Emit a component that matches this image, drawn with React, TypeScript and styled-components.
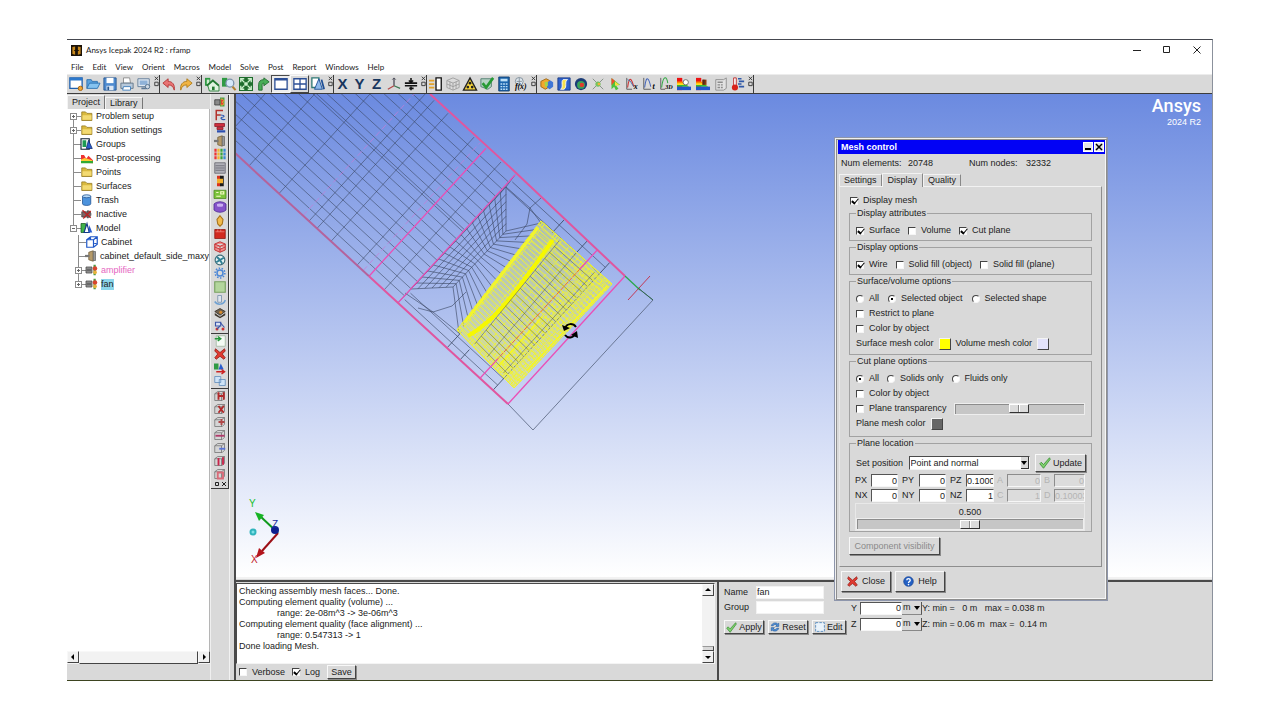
import React from 'react';
import styled, { createGlobalStyle, css } from 'styled-components';

const GREY = '#d9d9d9';
const DARK = '#3c3c3c';
const PINK = '#ea4fb6';

const Global = createGlobalStyle`
  * { box-sizing: border-box; }
  body {
    margin: 0;
    background: #fff;
    color: #222;
    font: 9px/11px "Liberation Sans", Arial, sans-serif;
  }
  button, input, select { font: inherit; color: inherit; margin: 0; padding: 0; }
  button { border: 0; background: none; }
`;

const raised = css`
  border: 1px solid;
  border-color: #f8f8f8 #444 #444 #f8f8f8;
  box-shadow: 1px 1px 0 #8a8a8a;
  background: ${GREY};
`;
const sunken = css`
  border: 1px solid;
  border-color: #4a4a4a #f4f4f4 #f4f4f4 #4a4a4a;
`;

/* ---------- window frame ---------- */
const Page = styled.div`
  min-height: 100vh;
  padding: 39px 67px;
  display: flex;
`;
const AppWindow = styled.main`
  position: relative;
  flex: 1;
  min-width: 0;
  display: flex;
  flex-direction: column;
  background: ${GREY};
  border-top: 1px solid #45484f;
  border-right: 1px solid #8b919c;
  border-bottom: 1px solid #3d4420;
`;
const TitleBar = styled.header`
  height: 20px;
  display: flex;
  align-items: center;
  gap: 4px;
  padding-left: 4px;
  background: #fff;
  font: 8px/12px Lato, "Open Sans", sans-serif;
`;
const Title = styled.h1`
  flex: 1;
  margin: 0;
  font: inherit;
`;
const WinButtons = styled.div`
  display: flex;
`;
const WinButton = styled.button`
  width: 30px;
  height: 20px;
  display: grid;
  place-items: center;
`;
const MenuBar = styled.nav`
  height: 14px;
  display: flex;
  align-items: center;
  gap: 9px;
  padding: 0 0 1px 4px;
  background: #fff;
  font: 8px/12px Lato, "Open Sans", sans-serif;
`;
const ToolBar = styled.div`
  height: 20px;
  display: flex;
  border-top: 1px solid #ececec;
  border-bottom: 1px solid ${DARK};
`;
const ToolGroup = styled.div<{ $pad?: number }>`
  display: flex;
  align-items: center;
  padding-left: ${p => p.$pad || 0}px;
  border-right: 1px solid ${DARK};
`;
const ToolButton = styled.button<{ $w?: number; $state?: 'in' | 'out' }>`
  width: ${p => p.$w || 17}px;
  height: 18px;
  display: grid;
  place-items: center;
  ${p => p.$state === 'in' && css`${sunken} background: #ececec;`}
  ${p => p.$state === 'out' && css`${raised} box-shadow: none;`}
`;
const AxisLetter = styled.span`
  font-weight: bold;
  font-size: 15px;
  line-height: 18px;
  color: #17365e;
`;
const Handle = styled.span`
  width: 7px;
  height: 16px;
  display: grid;
  place-items: start center;
`;

/* ---------- project panel ---------- */
const Body = styled.div`
  flex: 1;
  display: flex;
  min-height: 0;
`;
const ProjectPanel = styled.aside`
  width: 143px;
  display: flex;
  flex-direction: column;
  padding-bottom: 16px;
`;
const SideTabs = styled.div`
  height: 15px;
  display: flex;
  align-items: flex-end;
`;
const SideTab = styled.button<{ $on?: boolean }>`
  height: ${p => (p.$on ? 14 : 12)}px;
  padding: 0 4px;
  border-top: 1px solid #f4f4f4;
  border-left: 1px solid #f4f4f4;
  border-right: 1px solid #777;
`;
const Tree = styled.ul`
  flex: 1;
  margin: 0;
  padding: 0;
  list-style: none;
  background: #fff;
  border-right: 1px solid #b5b5b5;
`;
const TreeRow = styled.li<{ $child?: boolean }>`
  height: 14px;
  display: flex;
  align-items: center;
  padding-left: ${p => (p.$child ? 8 : 3)}px;
  white-space: nowrap;
`;
const Gutter = styled.span<{ $first?: boolean; $last?: boolean }>`
  width: 11px;
  height: 14px;
  display: flex;
  align-items: center;
  background:
    linear-gradient(#8c8c8c, #8c8c8c) 3px ${p => (p.$first ? '7px' : '0')} / 1px ${p => (p.$last ? '7px' : '14px')} no-repeat,
    linear-gradient(#8c8c8c, #8c8c8c) 3px 7px / 8px 1px no-repeat;
`;
const Expander = styled.button<{ $open?: boolean }>`
  width: 7px;
  height: 7px;
  border: 1px solid #8c8c8c;
  background:
    linear-gradient(#666, #666) 1px 2px / 3px 1px no-repeat,
    linear-gradient(#666, #666) 2px ${p => (p.$open ? 2 : 1)}px / 1px ${p => (p.$open ? 1 : 3)}px no-repeat,
    #fff;
`;
const TreeLabel = styled.span<{ $pink?: boolean; $sel?: boolean }>`
  margin-left: 3px;
  color: ${p => (p.$pink ? '#e566bf' : '#222')};
  background: ${p => (p.$sel ? '#8cd6ea' : 'transparent')};
`;
const HScroll = styled.div`
  height: 13px;
  display: flex;
  background: #f2f2f2;
`;
const ScrollButton = styled.button`
  width: 12px;
  height: 12px;
  display: grid;
  place-items: center;
  ${raised}
  box-shadow: none;
  background: #f0f0f0;
`;
const HThumb = styled.div`
  flex: 1;
  ${raised}
  box-shadow: none;
  background: #f2f2f2;
`;
const Strip = styled.div`
  width: 19px;
  border-left: 1px solid #efefef;
  padding-top: 1px;
`;
const StripGroup = styled.div<{ $h: number }>`
  height: ${p => p.$h}px;
  display: flex;
  flex-direction: column;
  align-items: center;
  justify-content: space-around;
  border-right: 1px solid ${DARK};
  border-bottom: 1px solid ${DARK};
`;
const StripButton = styled.button`
  width: 13px;
  height: 12px;
  display: grid;
  place-items: center;
`;
const Sash = styled.div`
  width: 7px;
  border-left: 1px solid #f2f2f2;
  border-right: 2px solid #4a4a4a;
`;

/* ---------- right side ---------- */
const Main = styled.div`
  flex: 1;
  min-width: 0;
  display: flex;
  flex-direction: column;
`;
const Viewport = styled.section`
  position: relative;
  flex: 1;
  min-height: 300px;
  overflow: hidden;
  background: linear-gradient(#6b8ae0, #fff);
`;
const Scene = styled.svg`
  position: absolute;
  left: 0;
  top: 0;
  width: 976px;
  height: 484px;
`;
const Brand = styled.div`
  position: absolute;
  top: 1px;
  right: 11px;
  color: #fff;
  text-align: right;
`;
const BrandName = styled.div`
  font: 500 18px/22px Roboto, "Liberation Sans", sans-serif;
`;
const HSash = styled.div`
  height: 5px;
  border-top: 2px solid #f2f2f2;
  border-bottom: 2px solid #4a4a4a;
`;
const Bottom = styled.div`
  height: 98px;
  display: flex;
`;
const LogPane = styled.div`
  width: 483px;
  padding-top: 1px;
  border-right: 2px solid #4a4a4a;
`;
const LogBox = styled.div`
  height: 81px;
  width: 479px;
  display: flex;
  ${sunken}
  background: #fff;
`;
const LogText = styled.div`
  flex: 1;
  padding: 2px;
  line-height: 11px;
`;
const LogLine = styled.div<{ $in?: boolean }>`
  padding-left: ${p => (p.$in ? 38 : 0)}px;
`;
const VScroll = styled.div`
  width: 12px;
  display: flex;
  flex-direction: column;
  background: #f2f2f2;
`;
const VThumb = styled.div`
  height: 5px;
  margin-top: auto;
  ${raised}
  box-shadow: none;
  border-top-color: #999;
`;
const LogBar = styled.div`
  height: 16px;
  display: flex;
  align-items: center;
  gap: 7px;
  padding-left: 3px;
`;
const ObjectForm = styled.form`
  display: grid;
  grid-template-columns: 32px 68px;
  grid-template-rows: 14px 14px 16px;
  row-gap: 1px;
  align-content: start;
  align-items: center;
  padding: 3px 0 0 5px;
  width: 132px;
`;
const FormButtons = styled.div`
  grid-column: 1 / 3;
  display: flex;
  gap: 4px;
  padding-top: 8px;
`;
const Field = styled.input<{ $w?: number; $right?: boolean }>`
  width: ${p => (p.$w ? `${p.$w}px` : '100%')};
  min-width: 0;
  height: 13px;
  border: 1px solid;
  border-color: #555 #f6f6f6 #f6f6f6 #555;
  border-radius: 0;
  background: #fff;
  text-align: ${p => (p.$right ? 'right' : 'left')};
  &:disabled { background: #dcdcdc; color: #b4b4b4; border-color: #8c8c8c #f6f6f6 #f6f6f6 #8c8c8c; }
`;
const FlatField = styled(Field)`
  border-color: #f2f2f2;
`;
const PushButton = styled.button<{ $h?: number; $w?: number }>`
  height: ${p => p.$h || 14}px;
  ${p => p.$w && `width: ${p.$w}px;`}
  display: flex;
  align-items: center;
  justify-content: center;
  gap: 2px;
  padding: 0 2px;
  white-space: nowrap;
  ${raised}
  &:disabled { color: #8a8a8a; }
`;
const WideButton = styled(PushButton)`
  gap: 4px;
`;
const Extents = styled.div`
  padding-top: 19px;
  display: flex;
  flex-direction: column;
  gap: 2px;
`;
const ExtentRow = styled.div`
  display: flex;
  align-items: center;
  height: 14px;
  white-space: pre;
`;
const AxisLabel = styled.label`
  width: 9px;
`;
const Unit = styled.button`
  width: 20px;
  height: 13px;
  line-height: 11px;
  display: flex;
  align-items: center;
  justify-content: space-between;
  padding: 0 1px;
  border-right: 1px solid #555;
  border-bottom: 1px solid #888;
`;

/* ---------- dialog ---------- */
const Dialog = styled.section`
  position: absolute;
  top: 97px;
  right: 104px;
  width: 274px;
  height: 464px;
  border: 2px solid;
  border-color: #f0f0f0 #8e8e8e #8e8e8e #f0f0f0;
  outline: 1px solid #8e96ac;
  outline-offset: -1px;
  background: ${GREY};
  padding: 1px 1px 0 3px;
  box-shadow: inset 1px 1px 0 #8e8e8e, inset -1px -1px 0 #f6f6f6;
`;
const DialogTitle = styled.header`
  height: 14px;
  display: flex;
  align-items: center;
  gap: 1px;
  padding: 0 1px 0 3px;
  margin-left: -1px;
  background: #0202f5;
  color: #fff;
`;
const DialogName = styled.h2`
  flex: 1;
  margin: 0;
  font-size: 9px;
  line-height: 12px;
`;
const SmallWin = styled.button`
  width: 10px;
  height: 10px;
  display: grid;
  place-items: center;
  border: 1px solid #fff;
  background: #e6e6e6;
`;
const Stats = styled.div`
  display: flex;
  height: 19px;
  align-items: center;
  padding-left: 2px;
`;
const Stat = styled.span<{ $w: number }>`
  width: ${p => p.$w}px;
`;
const Tabs = styled.div`
  height: 13px;
  display: flex;
  align-items: flex-end;
`;
const Tab = styled.button<{ $on?: boolean }>`
  height: ${p => (p.$on ? 14 : 12)}px;
  margin-bottom: ${p => (p.$on ? -1 : 0)}px;
  padding: 0 ${p => (p.$on ? 5 : 4)}px;
  position: relative;
  background: ${GREY};
  border-top: 1px solid #f2f2f2;
  border-left: 1px solid #f2f2f2;
  border-right: 1px solid #888;
`;
const TabPanel = styled.div`
  height: 381px;
  margin-right: 3px;
  padding: 6px 9px 0;
  border: 1px solid;
  border-color: #f2f2f2 #8e8e8e #8e8e8e #e8e8e8;
`;
const Group = styled.fieldset<{ $b?: number }>`
  min-width: 0;
  margin: 0 0 1px;
  padding: 4px 6px ${p => p.$b ?? 2}px;
  border: 1px solid #a2a2a2;
`;
const Legend = styled.legend`
  height: 11px;
  line-height: 11px;
  padding: 0 1px;
`;
const Row = styled.div<{ $gap?: number }>`
  height: 15px;
  display: flex;
  align-items: center;
  gap: ${p => p.$gap ?? 9}px;
  white-space: nowrap;
`;
const TopRow = styled(Row)`
  padding-left: 1px;
`;
const Option = styled.label`
  display: flex;
  align-items: center;
  gap: 5px;
  white-space: nowrap;
`;
const CheckInput = styled.input`
  appearance: none;
  width: 8px;
  height: 8px;
  flex: none;
  border: 1px solid;
  border-color: #444 #f6f6f6 #f6f6f6 #444;
  background: #fff;
  &:checked::before {
    content: '';
    display: block;
    width: 3px;
    height: 5px;
    margin: -1px 0 0 2px;
    border: solid #000;
    border-width: 0 1px 2px 0;
    transform: rotate(40deg);
  }
`;
const RadioInput = styled(CheckInput)`
  border-radius: 50%;
  &:checked::before {
    width: 2px;
    height: 2px;
    margin: 2px;
    border: 0;
    background: #000;
    transform: none;
  }
`;
const Swatch = styled.button<{ $c: string }>`
  width: 12px;
  height: 12px;
  border: 1px solid;
  border-color: #f4f4f4 #444 #444 #f4f4f4;
  background: ${p => p.$c};
`;
const Slider = styled.input`
  appearance: none;
  width: 100%;
  min-width: 0;
  height: 12px;
  border: 1px solid #eee;
  background: #c6c6c6;
  box-shadow: inset 1px 1px 0 #8c8c8c;
  &::-webkit-slider-thumb {
    appearance: none;
    width: 20px;
    height: 9px;
    border: 1px solid;
    border-color: #fff #333 #333 #fff;
    background: linear-gradient(90deg, #dcdcdc 8px, #888 8px, #888 9px, #fff 9px, #fff 10px, #dcdcdc 10px);
  }
`;
const SelectBox = styled.div`
  position: relative;
  width: 121px;
  height: 14px;
`;
const Select = styled.select`
  appearance: none;
  width: 100%;
  height: 14px;
  padding-left: 1px;
  ${sunken}
  border-radius: 0;
  background: #fff;
`;
const SelectArrow = styled.span`
  position: absolute;
  top: 1px;
  right: 1px;
  width: 8px;
  height: 12px;
  display: grid;
  place-items: center;
  background: ${GREY};
  border-right: 1px solid #333;
  border-bottom: 1px solid #333;
  pointer-events: none;
`;
const PositionRow = styled.div`
  display: flex;
  align-items: center;
  justify-content: space-between;
  height: 20px;
  margin-right: -1px;
`;
const Coords = styled.div`
  display: grid;
  grid-template-columns: 16px 27px 21px 27px 20px 28px 13px 34px 13px 31px;
  grid-auto-rows: 15px;
  align-items: center;
  margin-left: -1px;
`;
const CoordLabel = styled.label<{ $off?: boolean; $in?: number }>`
  padding-left: ${p => p.$in || 0}px;
  color: ${p => (p.$off ? '#b4b4b4' : 'inherit')};
`;
const PlaneSlider = styled.div`
  margin-left: -1px;
  display: flex;
  flex-direction: column;
  padding-top: 3px;
  border: 1px solid #e8e8e8;
  text-align: center;
`;
const PanelFoot = styled.div`
  padding-top: 4px;
`;
const DialogFoot = styled.footer`
  display: flex;
  gap: 4px;
  padding: 4px 0 0 2px;
`;

/* ---------- icons, each drawn on a 16 x 16 grid ---------- */
const small = { fontFamily: 'Liberation Serif, serif', fontStyle: 'italic', fontWeight: 'bold' } as const;
const rainbow = (
  <>
    <path d="M0 1h6v14H0z" fill="#e11" /><path d="M0 5h6l3 2v2H0z" fill="#f80" />
    <path d="M0 7h9l4 3H0z" fill="#fd2" /><path d="M0 9h11l3 2H0z" fill="#3b3" /><path d="M0 11h16v4H0z" fill="#25c" />
  </>
);
const fold = (
  <>
    <path d="M1 4V2.500h5L8 4.500h6.500v9.500H1z" fill="#d9b93f" stroke="#8f7318" />
    <path d="M2 7h12v6H2z" fill="#f3da72" />
  </>
);
const board = (c: string, d: string) => (
  <>
    <path d="M1 5l4-3h9v9l-3 3H1z" fill="#d5d5d5" stroke="#6f6f6f" /><path d="M1 5h9v9M10 5l4-3" fill="none" stroke="#6f6f6f" />
    <path d={d} fill="none" stroke={c} strokeWidth="2.500" />
  </>
);
const ICONS: Record<string, React.ReactNode> = {
  app: <><path d="M0 0h16v16H0z" fill="#1b1208" /><path d="M2 3l4-1v5L4 8l2 1v5l-4-1zM14 3l-4-1v5l2 1-2 1v5l4-1z" fill="#c98a1d" /></>,
  newWin: <><path d="M1 1h14v12H1z" fill="#fff" stroke="#1d5fae" strokeWidth="1.500" /><path d="M1 1h14v3H1z" fill="#2d78cc" /><circle cx="13" cy="13" r="2.500" fill="#f3a734" stroke="#a15f0a" /></>,
  open: <><path d="M1 13V3h5l1 2h6v3" fill="#5aa2df" stroke="#2a6fae" /><path d="M1 13L4 7h12l-3 6z" fill="#85c3f0" stroke="#2a6fae" /></>,
  save: <><path d="M1 1h14v14H1z" fill="#4f8bd0" stroke="#27568f" /><path d="M4 1h8v6H4z" fill="#fff" /><path d="M4 10h8v5H4z" fill="#dce7f4" /><path d="M5 11h2v4H5z" fill="#27568f" /></>,
  print: <><path d="M4 1h7l1 6H4z" fill="#fff" stroke="#888" /><path d="M1 7h14v6H1z" fill="#b8c9da" stroke="#5e7388" /><path d="M4 11h8v4H3z" fill="#fff" stroke="#3c7dbb" /></>,
  photo: <><path d="M1 2h13v9H1z" fill="#dfe8f1" stroke="#5d7896" /><path d="M3 4h9v5H3z" fill="#8fb2d8" /><path d="M5 13h6" stroke="#5d7896" strokeWidth="2" /><circle cx="12" cy="11" r="2.500" fill="#cfd9e4" stroke="#4d6a88" /></>,
  undo: <path d="M7 2L1 7l6 5V9c4 0 6 2 7 6 1-6-2-10-7-10z" fill="#e87474" stroke="#b43434" />,
  redo: <path d="M9 2l6 5-6 5V9c-4 0-6 2-7 6-1-6 2-10 7-10z" fill="#f0b443" stroke="#b07b14" />,
  home: <><path d="M0 1h6v9H0z" fill="#2f9a44" /><path d="M2 3h3v5H2z" fill="#cfeccf" /><path d="M3 9l6-5 7 6v6H5z" fill="#dff3df" stroke="#247a33" /><path d="M2 10l7-6 7 6" fill="none" stroke="#247a33" strokeWidth="2" /><path d="M8 11h3v4H8z" fill="#247a33" /></>,
  zoomIn: <><path d="M0 1h6v10H0z" fill="#2f9a44" /><path d="M5 9l3-6 2 7z" fill="#2456b5" /><circle cx="9" cy="7" r="4.500" fill="#d6e8f8" stroke="#7c93aa" strokeWidth="1.500" /><path d="M12 11l3.500 4" stroke="#b08030" strokeWidth="2.500" /></>,
  fit: <><path d="M0 0h16v16H0z" fill="#1f6d2d" /><path d="M2 6V2h4M10 2h4v4M14 10v4h-4M6 14H2v-4M3 3l3 3M13 3l-3 3M13 13l-3-3M3 13l3-3" stroke="#cdf0cd" fill="none" strokeWidth="1.500" /><path d="M6 6h4v4H6z" fill="#cdf0cd" /></>,
  turn: <path d="M3 15V9c0-4 2-6 6-6V1l6 4.500-6 4.500V7C7 7 7 8 7 10v5z" fill="#49ad57" stroke="#1f6d2d" />,
  one: <><path d="M1 2h14v12H1z" fill="#fff" stroke="#2c4f96" strokeWidth="1.500" /><path d="M1 3h14" stroke="#2c4f96" strokeWidth="2" /></>,
  four: <path d="M1 2h14v12H1zM8 2v12M1 8h14" fill="#fff" stroke="#2c4f96" strokeWidth="1.500" />,
  shapes: <><path d="M1 1h8v11H1z" fill="#fff" stroke="#2f7a74" strokeWidth="1.500" /><path d="M4 14L9 2l4 12z" fill="#8fb9ea" stroke="#1d4f96" /><path d="M12 3l3 11" stroke="#1d4f96" strokeWidth="2" /></>,
  axes: <><path d="M8 1v9" stroke="#4a4a56" strokeWidth="1.500" /><path d="M8 10L1 14" stroke="#b24848" strokeWidth="1.500" /><path d="M8 10l7 3" stroke="#3d7a54" strokeWidth="1.500" /><path d="M6 3l2-2 2 2" fill="none" stroke="#4a4a56" /></>,
  flip: <path d="M1 7h14M1 10h14M8 1v5M8 11v4M5.500 4L8 6l2.500-2M6 13h5" stroke="#111" strokeWidth="1.800" fill="none" />,
  inlet: <><path d="M8 1h6v14H8z" fill="#fff" stroke="#111" strokeWidth="1.500" /><path d="M0 4h6M0 8h6M0 12h6" stroke="#e3a32b" strokeWidth="2" /></>,
  mesh3: <path d="M1 4l7-3 7 3v8l-7 3-7-3zM1 4l7 3 7-3M8 7v8M1 8l7 3 7-3M4.500 5.500v8M11.500 5.500v8" fill="#ddd" stroke="#9d9d9d" />,
  warn: <><path d="M8 1l7.500 14H.5z" fill="#f5d33c" stroke="#222" strokeWidth="1.500" /><circle cx="8" cy="7" r="1.500" fill="#222" /><circle cx="5.500" cy="11.500" r="1.500" fill="#222" /><circle cx="10.500" cy="11.500" r="1.500" fill="#222" /></>,
  check2: <><path d="M1 2h12v9l-4 3-8-3z" fill="#b5d3c4" stroke="#4a7a6a" /><path d="M3 7l4 5 8-11" fill="none" stroke="#269a34" strokeWidth="3" /></>,
  calc: <><path d="M2 0h12v16H2z" fill="#1d66ae" stroke="#113e70" /><path d="M4 2h8v3H4z" fill="#bfe0f7" /><path d="M4 8h8M4 11h8M4 14h8" stroke="#bfe0f7" strokeDasharray="2 1" strokeWidth="1.500" /></>,
  fx: <><circle cx="6" cy="5" r="4.500" fill="#dfe7ee" stroke="#7c8a96" /><path d="M3 5h6M6 1v8" stroke="#7c8a96" /><text x="1" y="14" fontSize="9" {...small}>f(x)</text></>,
  cube: <><path d="M1 5l6-3 4 2v7l-5 3-5-3z" fill="#f3a72e" stroke="#9b6410" /><path d="M8 6l4-2 3 2v5l-4 3-3-2z" fill="#3f76d6" /><path d="M5 6l4-1v5l-3 2z" fill="#a7d44a" /></>,
  plane: <><path d="M1 1h14v14H1z" fill="#2f62cc" stroke="#1a3a86" /><path d="M4 14c4-2 0-9 3-11h5c-4 2 0 9-4 11z" fill="#f7e04c" stroke="#fff" /></>,
  iso: <><circle cx="8" cy="8" r="7" fill="#1c3d78" /><circle cx="8" cy="9" r="4.500" fill="#3aa35b" /><circle cx="9" cy="9" r="2.500" fill="#e33b2c" /></>,
  point: <><path d="M2 2l12 12M14 2L2 14" stroke="#7d8a80" strokeWidth="1" /><circle cx="8" cy="8" r="3" fill="#74c35f" /><circle cx="9" cy="8" r="1.500" fill="#f2b33a" /></>,
  probe: <><path d="M4 1l10 8-5 .5 3 4-3 1.500-2-4-3 3z" fill="#4fc33c" /><path d="M4 1l4 3.500-4 5z" fill="#f04e2a" /><path d="M8 5l5 4-5 1z" fill="#f7e33c" /></>,
  plotx: <><path d="M2 1v13h6" stroke="#555" fill="none" /><path d="M3 12c2-16 5-8 7-1" fill="none" stroke="#c33" strokeWidth="1.200" /><path d="M3 3c4 1 5 6 7 8" stroke="#36a" fill="none" /><text x="10" y="14" fontSize="9" {...small}>x</text></>,
  plott: <><path d="M2 1v13h8" stroke="#555" fill="none" /><path d="M3 12C5-4 8 2 10 11" fill="none" stroke="#46b" strokeWidth="1.200" /><text x="12" y="14" fontSize="9" {...small}>t</text></>,
  plot3: <><path d="M2 1v13h5" stroke="#555" fill="none" /><path d="M3 12C5-4 9 0 10 7" fill="none" stroke="#3a4" strokeWidth="1.200" /><text x="7" y="14" fontSize="7" {...small}>3D</text></>,
  rain1: <>{rainbow}<circle cx="10" cy="6" r="3" fill="#fff" stroke="#666" /></>,
  rain2: <>{rainbow}<path d="M7 3h5v6H7z" fill="#8b3a10" /><path d="M9 3v6" stroke="#222" /></>,
  report: <><path d="M2 3h9l3-2v12l-3 2H2z" fill="#e2e2e2" stroke="#8c8c8c" /><path d="M4 6h6M4 9h3M8 9h2M4 12h3M8 12h2" stroke="#8c8c8c" strokeWidth="1.500" /></>,
  thermo: <><path d="M3 1h3v9H3z" fill="#fff" stroke="#b22" /><circle cx="4.500" cy="12" r="3.500" fill="#d8221a" /><path d="M8 2h4M9 5h6M8 8h4M9 11h6" stroke="#2f58a8" strokeWidth="1.800" /></>,
  folder: fold,
  groups: <><path d="M0 1h11v14H0z" fill="#fff" stroke="#123" strokeWidth="1.500" /><path d="M2 3h5v9H2z" fill="#1c9a52" /><path d="M7 14l3-11 5 11z" fill="#2a5ccc" stroke="#0e2a6a" /></>,
  post: <><path d="M0 14V4h4l3 5 3-4 6 6v4z" fill="#e33" /><path d="M0 14v-4l5-2 10 3v3z" fill="#fc3" /><path d="M0 12h16v3H0z" fill="#3a3" /></>,
  trash: <><path d="M2 3h11v10c0 3-11 3-11 0z" fill="#4c93dd" stroke="#1c4f8f" /><ellipse cx="7.500" cy="3" rx="5.500" ry="2" fill="#b7d9f6" stroke="#1c4f8f" /></>,
  inactive: <><path d="M1 5h6v7H1zM8 4c7-2 7 10 0 9z" fill="#7d6464" stroke="#444" /><path d="M2 3l11 10M13 4L3 14" stroke="#b22" strokeWidth="1.500" /></>,
  model: <><path d="M0 2h6v12H0z" fill="#3fb34a" stroke="#1b5a22" /><path d="M4 14L8 2l3 12z" fill="#fff" stroke="#123a86" strokeWidth="1.500" /><path d="M10 14l1-10 4 10z" fill="#2a5ccc" /></>,
  cabinet: <path d="M1 5h9v10H1zM1 5l5-4h9v10l-5 4M10 5l5-4M6 2v3M11 10h3" fill="none" stroke="#1f57c8" strokeWidth="1.600" />,
  wall: <><path d="M5 3l6-2v14l-6-2z" fill="#b59a6a" stroke="#6e5a34" /><path d="M11 2h3v12h-3z" fill="#9a9a9a" stroke="#666" /><path d="M0 8h6" stroke="#777" strokeWidth="3" /></>,
  fan: <><path d="M0 4h8v8H0z" fill="#999" stroke="#444" /><path d="M1 7h6M1 9h6" stroke="#444" /><path d="M10 1h3v14h-3z" fill="#4c9a42" /><circle cx="12" cy="6" r="3" fill="#d8442f" /><circle cx="12" cy="11" r="2.500" fill="#e8b23a" /></>,
  s1: <><path d="M1 5h7v7H1z" fill="#8a8a8a" stroke="#333" /><path d="M8 2h6v12H8z" fill="#4f9d40" /><path d="M9 4c5 0 5 4 2 4 3 1 3 5-2 4" fill="#d43" stroke="#fb3" /></>,
  s2: <><path d="M3 15V2h9M3 8h6" fill="none" stroke="#b3322b" strokeWidth="2" /><path d="M9 8c6 0 5 3 2 3s-2 4 4 3" fill="none" stroke="#2b58b3" strokeWidth="1.500" /></>,
  s3: <><path d="M1 2h13v4H1zM4 7h8v3H4z" fill="#cf2f3e" stroke="#8a1622" /><path d="M4 11h11v3H4z" fill="#2d4fb0" /></>,
  s5: <><path d="M2 1v14" stroke="#e33" strokeWidth="3" strokeDasharray="4 1" /><path d="M6 1v14" stroke="#f5b52c" strokeWidth="3" strokeDasharray="4 1" /><path d="M10 1v14" stroke="#3aa53a" strokeWidth="3" strokeDasharray="4 1" /><path d="M14 1v14" stroke="#3a8ad0" strokeWidth="3" strokeDasharray="4 1" /></>,
  s6: <><path d="M1 1h14v14H1z" fill="#b0b0b8" stroke="#5f5f68" /><path d="M2 5h12M2 8h12M2 11h12" stroke="#5f5f68" /></>,
  s7: <><path d="M4 1h5v14H4z" fill="#d8321f" /><path d="M8 1h5v14H8z" fill="#1a1a1a" /><path d="M4 5h8v6H4z" fill="#f3b02c" /></>,
  s8: <><path d="M0 3h16v11H0z" fill="#7cc43c" stroke="#4c8420" /><path d="M3 6h3M9 5h4v3H9zM3 11h6" stroke="#f6f8c8" strokeWidth="1.500" fill="none" /></>,
  s9: <><path d="M0 4c4-4 12-4 16 0v8c-4 4-12 4-16 0z" fill="#8553c9" stroke="#4a2590" /><path d="M4 4c2-1 6-1 8 0v3c-2 1-6 1-8 0z" fill="#c9aef0" /></>,
  s10: <path d="M8 1l4 5-1 6-3 3-3-3-1-6z" fill="#f1bb4b" stroke="#a9731a" strokeWidth="1.500" />,
  s11: <><path d="M1 2h14v12H1z" fill="#d22a20" stroke="#8a140e" /><path d="M2 5h12M5 2v3M9 2v3" stroke="#f08a80" /></>,
  s12: <path d="M1 4l7-3 7 3v8l-7 3-7-3zM1 4l7 3 7-3M8 7v8M1 8l7 3 7-3" fill="#f28c8c" stroke="#c23434" strokeWidth="1.300" />,
  s13: <><circle cx="8" cy="8" r="6.500" fill="#e6f2f2" stroke="#3c6a78" strokeWidth="1.500" /><path d="M8 8L4 4M8 8l5-3M8 8l3 5M8 8l-5 3" stroke="#2e7f94" strokeWidth="2.500" /></>,
  s14: <><circle cx="8" cy="8" r="4" fill="none" stroke="#4a86d6" strokeWidth="2" /><circle cx="8" cy="8" r="6.500" fill="none" stroke="#4a86d6" strokeWidth="2" strokeDasharray="2 2" /></>,
  s15: <path d="M1 1h14v14H1z" fill="#b3d69c" stroke="#78a060" strokeWidth="1.500" />,
  s16: <><path d="M5 2h5v9H5z" fill="#dfe6ee" stroke="#6d88a6" /><path d="M1 10c3 5 12 5 14-2" fill="none" stroke="#6da0d2" strokeWidth="2" /></>,
  s17: <><path d="M1 6l7-4 7 4-7 5z" fill="#6f614e" stroke="#2d2820" /><path d="M1 8l7 5 7-5v3l-7 4-7-4z" fill="#3f382e" /><circle cx="9" cy="7" r="2" fill="#d98b2b" /></>,
  s18: <><path d="M2 3h7v5H2z" fill="#dbe2f3" stroke="#3a55a8" strokeWidth="1.500" /><circle cx="4" cy="12" r="2" fill="#c33" /><circle cx="12" cy="12" r="2" fill="#c33" /><path d="M8 3l6 7M4 12l4-4" stroke="#3a55a8" strokeWidth="1.500" /></>,
  e1: <><path d="M3 1h12v14H3z" fill="#f4faf4" stroke="#9ab09a" /><path d="M1 5h7M5 2l4 3-4 3" stroke="#25963a" strokeWidth="2" fill="none" /></>,
  close: <path d="M2 1l6 5 6-5 1 3-4 4 4 5-2 2-5-4-5 4-2-2 4-5-4-4z" fill="#e03a30" stroke="#8e1712" />,
  e3: <><path d="M0 2h6v8H0z" fill="#2f9a44" /><path d="M6 10l3-8 4 8z" fill="#2a5ccc" /><path d="M3 13h11M10 10l4 3-4 3" stroke="#c22" strokeWidth="2" fill="none" /></>,
  e4: <path d="M1 2h8v8H1zM7 6h8v8H7z" fill="#cfe3f6" stroke="#5a87b8" />,
  b1: board('#b22a2a', 'M6 3v10M13 3v10M7 8h6'),
  b2: board('#b22a2a', 'M6 4l7 9M13 4l-7 9'),
  b3: board('#b04848', 'M10 4v8M6 8h8'),
  b4: board('#b03a6a', 'M2 9h12'),
  b5: board('#5a74d6', 'M7 9h8'),
  b6: board('#c8244a', 'M6 4v10M12 3v10'),
  b7: board('#d96a78', 'M5 6h7v8H5z'),
  tick: <path d="M1 9l2-2 3 3L14 1l1 2L6 15z" fill="#7fce6e" stroke="#2e8a2a" />,
  help: <><circle cx="8" cy="8" r="7" fill="#2360c4" stroke="#153f8c" /><path d="M5.500 6c0-3 5-3 5 0 0 2-2.500 2-2.500 4" fill="none" stroke="#fff" strokeWidth="2" /><circle cx="8" cy="12.500" r="1.200" fill="#fff" /></>,
  reset: <path d="M2 6c2-6 9-5 10-3l2-1v5H9l2-2C9 3 6 4 5 6zM14 10c-2 6-9 5-10 3l-2 1V9h5l-2 2c2 2 5 1 6-1z" fill="#4d8ed6" stroke="#235a9c" />,
  edit: <path d="M1 1h14v14H1z" fill="#eaf3fb" stroke="#5d8fc0" strokeWidth="1.500" strokeDasharray="4 2" />,
  handle: <path d="M4 1l5 5M9 1L4 6M4 9h5v5H4z" fill="none" stroke="#333" strokeWidth="1.300" />,
};
const Icon = ({ name, size = 15 }: { name: string; size?: number }) => (
  <svg width={size} height={size} viewBox="0 0 16 16" overflow="visible" aria-hidden="true">{ICONS[name]}</svg>
);
const Arrow = ({ d }: { d: string }) => (
  <svg width="6" height="6" viewBox="0 0 6 6" aria-hidden="true"><path d={d} fill="#000" /></svg>
);

/* ---------- 3D view ---------- */
type Pt = [number, number];
const mix = (a: Pt, b: Pt, t: number): Pt => [a[0] + (b[0] - a[0]) * t, a[1] + (b[1] - a[1]) * t];
const line = (...pts: Pt[]) => 'M' + pts.map(p => `${p[0].toFixed(1)} ${p[1].toFixed(1)}`).join('L');
const slab = (x: number, s: number): Pt => [x + 117 * s, 154 + ((x - 236) * 250) / 272 - 128 * s];
const range = (n: number) => Array.from({ length: n }, (_, i) => i);

const crossLines = [192, 222, 249, 279, 309, 317, 331, 357, 384].map(x => line(slab(x, 0), slab(x, 1))).join('');
const longLines = [...range(17).map(i => (i + 1) / 18), 0.57].map(s => line(slab(80, s), slab(398, s))).join('');
const bandNodes = (f: number): Pt[] => [
  slab(398, f),
  mix([411, 289], [506, 187], f),
  mix([453, 287], [506, 231], f),
  mix([459, 333], [541, 223], f),
];
const rays = range(18).map(i => line(...bandNodes(i / 17))).join('');
const layers = range(7)
  .map(k => line(mix([411, 289], [453, 287], k / 6), mix([506, 187], [506, 231], k / 6)))
  .join('');
const sideLines =
  line([405, 293], [433, 312], [452, 306], [466, 292]) +
  line([418, 308], [433, 312], [460, 334]) +
  line([506, 187], [530, 208], [527, 224], [515, 240]) +
  line([541, 198], [530, 208], [541, 223]) +
  [0.04, 0.09, 0.91, 0.96].map(s => line(slab(400, s), slab(493, s))).join('');

const fanPt = (u: number, v: number): Pt =>
  mix(mix([457, 330], [541, 221], v), mix([514, 388], [612, 284], v), u);
const fanRibs = range(34).map(i => line(fanPt(0, i / 33), fanPt(1, i / 33))).join('');
const fanRows = [0, 0.02, 0.05, 0.2, 0.23, 0.26, 0.3, 0.4, 0.47, 0.55, 0.6, 0.63, 0.67, 0.71, 0.75, 0.8, 0.85, 0.9, 0.94, 0.97, 1]
  .map(u => line(fanPt(u, 0), fanPt(u, 1)))
  .join('');
const fanWeave = range(30)
  .map(i => line(fanPt(0.68, i / 30), fanPt(1, Math.min(1, (i + 2) / 30))) + line(fanPt(0.68, (i + 2) / 31), fanPt(1, i / 31)))
  .join('');
const fanEnds = range(6)
  .map(i => line(fanPt(0.05, i / 50), fanPt(1, i / 60)) + line(fanPt(0.05, 1 - i / 25), fanPt(0.95, 1 - i / 50)))
  .join('');
const gridOver =
  range(17).map(i => line(fanPt(0.28, (i + 0.7) / 18), fanPt(0.82, (i + 0.7) / 18))).join('') +
  [0.28, 0.5, 0.78].map(u => line(fanPt(u, 0.02), fanPt(u, 0.98))).join('');

const MeshScene = () => (
  <Scene viewBox="236 94 976 484" role="img" aria-label="Mesh view">
    <g fill="none" stroke="#35425c" strokeWidth="0.800">
      <path d={crossLines + longLines} opacity="0.700" />
      <path d={rays + layers + sideLines} opacity="0.750" />
      <path d={line(slab(447, 0), slab(447, 0.12)) + line(slab(460, 0), slab(460, 0.08)) + line(slab(493, 0), slab(493, 1)) + line(slab(447, 0.9), slab(447, 1)) + line(slab(470, 0.88), slab(470, 1))} />
      <path d="M508 404L533 430L653 300L638 288" stroke="#55627c" />
    </g>
    <g fill="none" stroke={PINK}>
      <path d={line(slab(303, 0), slab(303, 1)) + line(slab(363, 0), slab(363, 1))} stroke="#c77ad6" opacity="0.700" strokeDasharray="6 3" />
      <path d={line(slab(369, 0), slab(369, 1)) + line(slab(398, 0), slab(398, 1))} strokeWidth="1.300" />
      <path d={line(slab(200, 0), slab(369, 0))} stroke="#b4639c" strokeWidth="2" />
      <path d={line(slab(369, 0), slab(508, 0)) + 'M430 94L513 170L625 276'} stroke="#e0569f" strokeWidth="2" />
      <path d={line(slab(508, 0), slab(508, 1))} strokeWidth="1.300" />
    </g>
    <g fill="none" stroke="#f2f52c">
      <path d={line(fanPt(0, 0), fanPt(0, 1), fanPt(1, 1), fanPt(1, 0)) + 'Z'} fill="#f2f52c" fillOpacity="0.300" strokeWidth="1" strokeDasharray="3 1" />
      <path d={fanRibs} strokeWidth="1" />
      <path d={fanRows} strokeWidth="1" strokeDasharray="5 2" />
      <path d={fanWeave + fanEnds} strokeWidth="0.700" opacity="0.800" />
      <path d={line(fanPt(0.02, 0.08), fanPt(0.02, 0.95))} strokeWidth="3" />
      <path d="M468 336C500 318 520 285 553 240" stroke="#f6f800" strokeWidth="4" />
      <path d={line(fanPt(0.97, 0.15), fanPt(0.98, 0.97)) + line(fanPt(0.68, 0.03), fanPt(0.68, 0.5))} strokeWidth="2" />
    </g>
    <path d={gridOver} fill="none" stroke="#4b5232" strokeWidth="0.700" opacity="0.650" />
    <path d={line(slab(480, 0.1), slab(480, 0.9))} fill="none" stroke="#ef6a3c" strokeDasharray="5 1" />
    <path d={line(slab(480, 0), slab(480, 0.15)) + line(slab(480, 0.85), slab(480, 1))} stroke={PINK} strokeWidth="1.300" />
    <path d="M625 276L640 290" stroke="#2ba84c" strokeWidth="1.300" />
    <path d="M628 300L650 276" stroke="#c23a56" />
    <path d="M638 288L653 300" stroke="#2e6b4c" />
    <g fill="none" stroke="#000" strokeWidth="2">
      <path d="M565 328c2-5 8-5 11-1M565 335c3 4 8 3 10-1" />
      <path d="M562 325l2 6 6-3zM578 338l-1-7-6 4z" fill="#000" stroke="none" />
    </g>
    <g strokeWidth="2">
      <path d="M278 533L260 516" stroke="#109a1c" /><path d="M255 512l9 3-5 6z" fill="#16b324" />
      <path d="M278 533L262 551" stroke="#9c0f16" /><path d="M256 558l3-10 6 5z" fill="#b3141c" />
      <circle cx="275" cy="530" r="4" fill="#0d1f8f" /><circle cx="253" cy="532" r="2.500" fill="#7fe0e6" stroke="#31b4bd" />
    </g>
    <g fontSize="10" fontFamily="Liberation Sans, sans-serif">
      <text x="249" y="507" fill="#1bbf2a">Y</text>
      <text x="251" y="563" fill="#c3212b">X</text>
      <text x="272" y="528" fill="#1b2a9e">Z</text>
    </g>
  </Scene>
);

/* ---------- content ---------- */
const MENUS = ['File', 'Edit', 'View', 'Orient', 'Macros', 'Model', 'Solve', 'Post', 'Report', 'Windows', 'Help'];
const TOOLS: { icons: string[]; pad?: number }[] = [
  { icons: ['newWin', 'open', 'save', 'print', 'photo'] },
  { icons: ['undo', 'redo'] },
  { icons: ['home', 'zoomIn', 'fit', 'turn', 'one', 'four', 'shapes'], pad: 1 },
  { icons: ['X', 'Y', 'Z', 'axes', 'flip'] },
  { icons: ['inlet', 'mesh3', 'warn', 'check2', 'calc', 'fx'] },
  { icons: ['cube', 'plane', 'iso', 'point', 'probe', 'plotx', 'plott', 'plot3', 'rain1', 'rain2', 'report', 'thermo'], pad: 1 },
];
const WIDE = ['one', 'four', 'rain1', 'rain2'];
const STRIPS: { h: number; icons: string[] }[] = [
  { h: 239, icons: ['s1', 's2', 's3', 'wall', 's5', 's6', 's7', 's8', 's9', 's10', 's11', 's12', 's13', 's14', 's15', 's16', 's17', 's18'] },
  { h: 55, icons: ['e1', 'close', 'e3', 'e4'] },
  { h: 100, icons: ['b1', 'b2', 'b3', 'b4', 'b5', 'b6', 'b7'] },
];
type Node = { t: string; icon: string; child?: boolean; exp?: 'open' | 'shut'; last?: boolean; first?: boolean; pink?: boolean; sel?: boolean };
const NODES: Node[] = [
  { t: 'Problem setup', icon: 'folder', exp: 'shut', first: true },
  { t: 'Solution settings', icon: 'folder', exp: 'shut' },
  { t: 'Groups', icon: 'groups' },
  { t: 'Post-processing', icon: 'post' },
  { t: 'Points', icon: 'folder' },
  { t: 'Surfaces', icon: 'folder' },
  { t: 'Trash', icon: 'trash' },
  { t: 'Inactive', icon: 'inactive' },
  { t: 'Model', icon: 'model', exp: 'open', last: true },
  { t: 'Cabinet', icon: 'cabinet', child: true },
  { t: 'cabinet_default_side_maxy', icon: 'wall', child: true },
  { t: 'amplifier', icon: 'fan', child: true, exp: 'shut', pink: true },
  { t: 'fan', icon: 'fan', child: true, exp: 'shut', last: true, sel: true },
];
const COORDS: [string, string, boolean?][] = [
  ['PX', '0'], ['PY', '0'], ['PZ', '0.1000'], ['A', '0', true], ['B', '0', true],
  ['NX', '0'], ['NY', '0'], ['NZ', '1'], ['C', '1', true], ['D', '0.10003', true],
];

const Check = ({ text, on }: { text: string; on?: boolean }) => (
  <Option><CheckInput type="checkbox" defaultChecked={on} />{text}</Option>
);
const Radio = ({ text, name, on }: { text: string; name: string; on?: boolean }) => (
  <Option><RadioInput type="radio" name={name} defaultChecked={on} />{text}</Option>
);

const MeshDialog = () => (
  <Dialog role="dialog" aria-labelledby="mesh-title">
    <DialogTitle>
      <DialogName id="mesh-title">Mesh control</DialogName>
      <SmallWin aria-label="Minimize"><svg width="8" height="8"><path d="M1 6h6" stroke="#000" strokeWidth="2" /></svg></SmallWin>
      <SmallWin aria-label="Close dialog"><svg width="8" height="8"><path d="M1 1l6 6M7 1L1 7" stroke="#000" strokeWidth="1.500" /></svg></SmallWin>
    </DialogTitle>
    <Stats>
      <Stat $w={67}>Num elements:</Stat><Stat $w={61}>20748</Stat>
      <Stat $w={57}>Num nodes:</Stat><Stat $w={40}>32332</Stat>
    </Stats>
    <Tabs role="tablist">
      <Tab role="tab">Settings</Tab><Tab role="tab" $on>Display</Tab><Tab role="tab">Quality</Tab>
    </Tabs>
    <TabPanel>
      <TopRow><Check text="Display mesh" on /></TopRow>
      <Group>
        <Legend>Display attributes</Legend>
        <Row $gap={8}><Check text="Surface" on /><Check text="Volume" /><Check text="Cut plane" on /></Row>
      </Group>
      <Group>
        <Legend>Display options</Legend>
        <Row $gap={8}><Check text="Wire" on /><Check text="Solid fill (object)" /><Check text="Solid fill (plane)" /></Row>
      </Group>
      <Group $b={3}>
        <Legend>Surface/volume options</Legend>
        <Row><Radio name="sv" text="All" /><Radio name="sv" text="Selected object" on /><Radio name="sv" text="Selected shape" /></Row>
        <Row><Check text="Restrict to plane" /></Row>
        <Row><Check text="Color by object" /></Row>
        <Row $gap={5}>
          <span>Surface mesh color</span><Swatch $c="#ffff00" aria-label="Surface mesh color" />
          <span>Volume mesh color</span><Swatch $c="#e2e2fa" aria-label="Volume mesh color" />
        </Row>
      </Group>
      <Group $b={5}>
        <Legend>Cut plane options</Legend>
        <Row $gap={8}><Radio name="cp" text="All" on /><Radio name="cp" text="Solids only" /><Radio name="cp" text="Fluids only" /></Row>
        <Row><Check text="Color by object" /></Row>
        <Row $gap={7}><Check text="Plane transparency" /><Slider type="range" defaultValue={50} aria-label="Plane transparency" /></Row>
        <Row $gap={5}><span>Plane mesh color</span><Swatch $c="#666" aria-label="Plane mesh color" /></Row>
      </Group>
      <Group $b={0}>
        <Legend>Plane location</Legend>
        <PositionRow>
          <label htmlFor="setpos">Set position</label>
          <SelectBox>
            <Select id="setpos" defaultValue="pn"><option value="pn">Point and normal</option></Select>
            <SelectArrow><Arrow d="M0 1h6L3 5z" /></SelectArrow>
          </SelectBox>
          <PushButton $h={18} $w={51}><Icon name="tick" size={12} />Update</PushButton>
        </PositionRow>
        <Coords>
          {COORDS.map(([l, v, off], i) => (
            <React.Fragment key={l}>
              <CoordLabel htmlFor={`c${l}`} $off={off} $in={off ? 3 : i % 5 ? 4 : 0}>{l}</CoordLabel>
              <Field id={`c${l}`} defaultValue={v} disabled={off} $right={v.length < 3} />
            </React.Fragment>
          ))}
        </Coords>
        <PlaneSlider>
          <label htmlFor="ppos">0.500</label>
          <Slider id="ppos" type="range" defaultValue={50} />
        </PlaneSlider>
      </Group>
      <PanelFoot><PushButton disabled $h={18} $w={91}>Component visibility</PushButton></PanelFoot>
    </TabPanel>
    <DialogFoot>
      <WideButton $h={21} $w={50}><Icon name="close" size={11} />Close</WideButton>
      <WideButton $h={21} $w={50}><Icon name="help" size={11} />Help</WideButton>
    </DialogFoot>
  </Dialog>
);

export default function App() {
  return (
    <Page>
      <Global />
      <AppWindow>
        <TitleBar>
          <Icon name="app" size={11} />
          <Title>Ansys Icepak 2024 R2 : rfamp</Title>
          <WinButtons>
            <WinButton aria-label="Minimize window"><svg width="8" height="8"><path d="M0 4.500h8" stroke="#222" /></svg></WinButton>
            <WinButton aria-label="Maximize window"><svg width="8" height="8"><path d="M.5 .5h6v6h-6z" fill="none" stroke="#222" /></svg></WinButton>
            <WinButton aria-label="Close window"><svg width="8" height="8"><path d="M.5 .5l7 7M7.500 .5l-7 7" stroke="#222" /></svg></WinButton>
          </WinButtons>
        </TitleBar>
        <MenuBar>{MENUS.map(m => <button key={m}>{m}</button>)}</MenuBar>
        <ToolBar role="toolbar">
          {TOOLS.map((g, i) => (
            <ToolGroup key={i} $pad={g.pad}>
              {g.icons.map(n => (
                <ToolButton key={n} aria-label={n} $w={WIDE.includes(n) ? 19 : 17} $state={n === 'one' ? 'in' : n === 'four' ? 'out' : undefined}>
                  {n.length === 1 ? <AxisLetter>{n}</AxisLetter> : <Icon name={n} size={14} />}
                </ToolButton>
              ))}
              <Handle><Icon name="handle" size={11} /></Handle>
            </ToolGroup>
          ))}
        </ToolBar>
        <Body>
          <ProjectPanel>
            <SideTabs role="tablist"><SideTab role="tab" $on>Project</SideTab><SideTab role="tab">Library</SideTab></SideTabs>
            <Tree>
              {NODES.map(n => (
                <TreeRow key={n.t} $child={n.child}>
                  <Gutter $first={n.first} $last={n.last}>
                    {n.exp && <Expander $open={n.exp === 'open'} aria-label={`Toggle ${n.t}`} />}
                  </Gutter>
                  <Icon name={n.icon} size={12} />
                  <TreeLabel $pink={n.pink} $sel={n.sel}>{n.t}</TreeLabel>
                </TreeRow>
              ))}
            </Tree>
            <HScroll>
              <ScrollButton aria-label="Scroll left"><Arrow d="M4 0v6L1 3z" /></ScrollButton>
              <HThumb />
              <ScrollButton aria-label="Scroll right"><Arrow d="M2 0v6l3-3z" /></ScrollButton>
            </HScroll>
          </ProjectPanel>
          <Strip>
            {STRIPS.map(s => (
              <StripGroup key={s.h} $h={s.h}>
                {s.icons.map(n => <StripButton key={n} aria-label={n}><Icon name={n} size={12} /></StripButton>)}
                {s.h === 100 && (
                  <svg width="14" height="6" aria-hidden="true"><path d="M2.500 1.500h3v3h-3zM9 1l4 4M13 1L9 5" fill="none" stroke="#222" /></svg>
                )}
              </StripGroup>
            ))}
          </Strip>
          <Sash />
          <Main>
            <Viewport>
              <MeshScene />
              <Brand><BrandName>Ansys</BrandName>2024 R2</Brand>
            </Viewport>
            <HSash />
            <Bottom>
              <LogPane>
                <LogBox>
                  <LogText role="log">
                    <LogLine>Checking assembly mesh faces... Done.</LogLine>
                    <LogLine>Computing element quality (volume) ...</LogLine>
                    <LogLine $in>range: 2e-08m^3 -&gt; 3e-06m^3</LogLine>
                    <LogLine>Computing element quality (face alignment) ...</LogLine>
                    <LogLine $in>range: 0.547313 -&gt; 1</LogLine>
                    <LogLine>Done loading Mesh.</LogLine>
                  </LogText>
                  <VScroll>
                    <ScrollButton aria-label="Scroll up"><Arrow d="M0 4h6L3 1z" /></ScrollButton>
                    <VThumb />
                    <ScrollButton aria-label="Scroll down"><Arrow d="M0 2h6L3 5z" /></ScrollButton>
                  </VScroll>
                </LogBox>
                <LogBar>
                  <Check text="Verbose" /><Check text="Log" on />
                  <PushButton $w={29}>Save</PushButton>
                </LogBar>
              </LogPane>
              <ObjectForm onSubmit={e => e.preventDefault()}>
                <label htmlFor="name">Name</label><FlatField id="name" defaultValue="fan" />
                <label htmlFor="group">Group</label><FlatField id="group" />
                <FormButtons>
                  <PushButton type="button" $w={40}><Icon name="tick" size={11} />Apply</PushButton>
                  <PushButton type="button" $w={40}><Icon name="reset" size={10} />Reset</PushButton>
                  <PushButton type="button" $w={34}><Icon name="edit" size={10} />Edit</PushButton>
                </FormButtons>
              </ObjectForm>
              <Extents>
                <ExtentRow>
                  <AxisLabel htmlFor="ey">Y</AxisLabel><Field id="ey" $w={42} $right defaultValue="0" />
                  <Unit type="button"><span>m</span><Arrow d="M0 1h6L3 5z" /></Unit>{'Y: min =   0 m   max = 0.038 m'}
                </ExtentRow>
                <ExtentRow>
                  <AxisLabel htmlFor="ez">Z</AxisLabel><Field id="ez" $w={42} $right defaultValue="0" />
                  <Unit type="button"><span>m</span><Arrow d="M0 1h6L3 5z" /></Unit>{'Z: min = 0.06 m  max =  0.14 m'}
                </ExtentRow>
              </Extents>
            </Bottom>
          </Main>
        </Body>
        <MeshDialog />
      </AppWindow>
    </Page>
  );
}
